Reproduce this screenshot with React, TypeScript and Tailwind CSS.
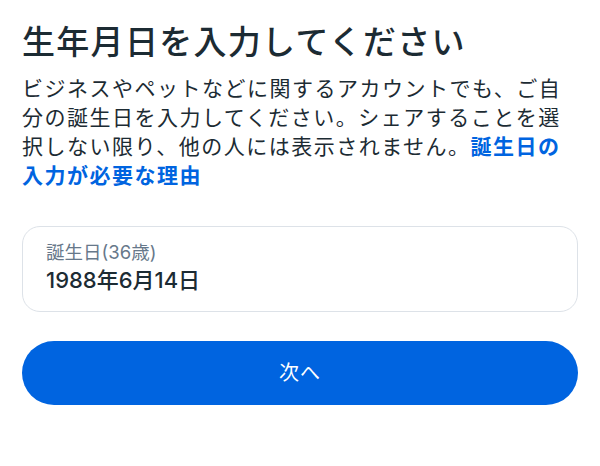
import React from "react";

export default function App() {
  return (
    <div
      className="w-[600px] h-[466px] bg-white px-[22px] pt-[21px]"
      style={{ fontFamily: 'Inter, "Noto Sans CJK JP", "Noto Sans", sans-serif' }}
    >
      <h1 className="text-[33px] leading-[42px] font-medium tracking-[1.3px] text-[#1c2b33]">
        生年月日を入力してください
      </h1>
      <p className="mt-[11px] text-[21px] leading-[29px] tracking-[1.5px] text-[#1c2b33]">
        ビジネスやペットなどに関するアカウントでも、ご自分の誕生日を入力してください。シェアすることを選択しない限り、他の人には表示されません。
        <span className="font-bold text-[#0064e0]">誕生日の入力が必要な理由</span>
      </p>
      <div className="mt-[36px] h-[86px] rounded-[18px] border border-[#dde2e8] px-[23px] pt-[14px]">
        <div className="text-[18.5px] leading-[22px] text-[#67788a]">誕生日(36歳)</div>
        <div className="mt-[3px] text-[22px] leading-[28px] font-medium text-[#1c2b33]">
          1988年6月14日
        </div>
      </div>
      <button className="mt-[29px] flex h-[64px] w-full items-center justify-center rounded-full bg-[#0064e0] text-[20px] tracking-[1px] text-white">
        次へ
      </button>
    </div>
  );
}
